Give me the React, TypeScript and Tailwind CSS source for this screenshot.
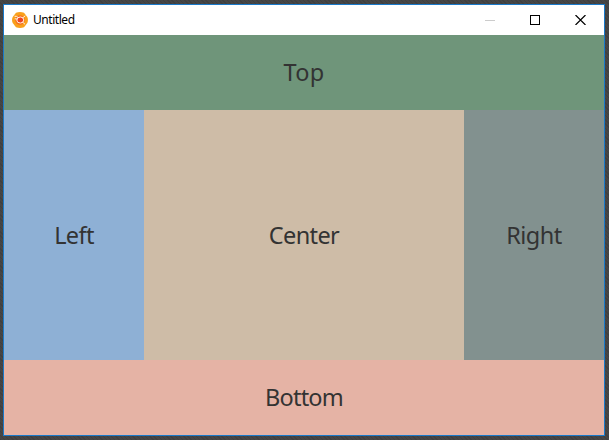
import React from "react";

function AppIcon() {
  return (
    <svg width="16" height="16" viewBox="0 0 16 16" className="shrink-0">
      <path d="M4 .7Q8-.7 12 .7L15.3 5Q16.6 8 15.3 11L12 15.3Q8 16.7 4 15.3L.7 11Q-.6 8 .7 5Z" fill="#f9a01b" />
      <circle cx="8" cy="8" r="4.8" fill="#f7701f" />
      <ellipse cx="8.3" cy="8" rx="3.5" ry="3" fill="#ee4423" stroke="#fff0df" strokeWidth="1" />
      <path d="M3 4.2Q5 4 6 5.3M3.2 6.8 5 7M13 4 10.8 5.8M12.7 12 10.7 10.2" fill="none" stroke="#fff0df" strokeWidth="1" strokeLinecap="round" />
    </svg>
  );
}

function WindowControls() {
  return (
    <div className="ml-auto flex items-center gap-[35px] pr-[18px] pb-px">
      <svg width="10" height="10" shapeRendering="crispEdges">
        <path d="M0 5.5H10" stroke="#cccccc" />
      </svg>
      <svg width="10" height="10" shapeRendering="crispEdges">
        <rect x=".5" y=".5" width="9" height="9" fill="none" stroke="#000" />
      </svg>
      <svg width="11" height="10" viewBox="0 0 11 10">
        <path d="M.5 0 10.5 10M10.5 0 .5 10" stroke="#000" strokeWidth="1.2" />
      </svg>
    </div>
  );
}

function Region({ label, className, textClass }: { label: string; className: string; textClass: string }) {
  return (
    <section className={`flex items-center justify-center ${className}`}>
      <span className={`text-[23.5px] leading-8 ${textClass}`}>{label}</span>
    </section>
  );
}

export default function App() {
  return (
    <main className="h-[440px] w-[609px] bg-[#434343] bg-[repeating-linear-gradient(45deg,#404040_0px,#404040_1px,#464646_1px,#464646_3px)] pt-1 pl-[3px] font-['Noto_Sans','Open_Sans',sans-serif] text-[#333333]">
      <div className="flex h-[432px] w-[602px] flex-col border border-[#1979ca] bg-white">
        <header className="flex h-[30px] shrink-0 items-center bg-white pl-2">
          <AppIcon />
          <span className="ml-[5px] text-xs tracking-[-0.45px] text-black">Untitled</span>
          <WindowControls />
        </header>
        <Region label="Top" className="h-[75px] bg-[#6f957a] pb-px" textClass="tracking-[0.3px]" />
        <div className="flex h-[250px]">
          <Region label="Left" className="w-[140px] bg-[#8eb0d5]" textClass="tracking-[-0.6px]" />
          <Region label="Center" className="w-[320px] bg-[#cebca7]" textClass="tracking-[-0.6px]" />
          <Region label="Right" className="w-[140px] bg-[#82918f]" textClass="tracking-[-0.5px]" />
        </div>
        <Region label="Bottom" className="h-[75px] bg-[#e5b3a5] pb-px" textClass="tracking-[-0.8px]" />
      </div>
    </main>
  );
}
